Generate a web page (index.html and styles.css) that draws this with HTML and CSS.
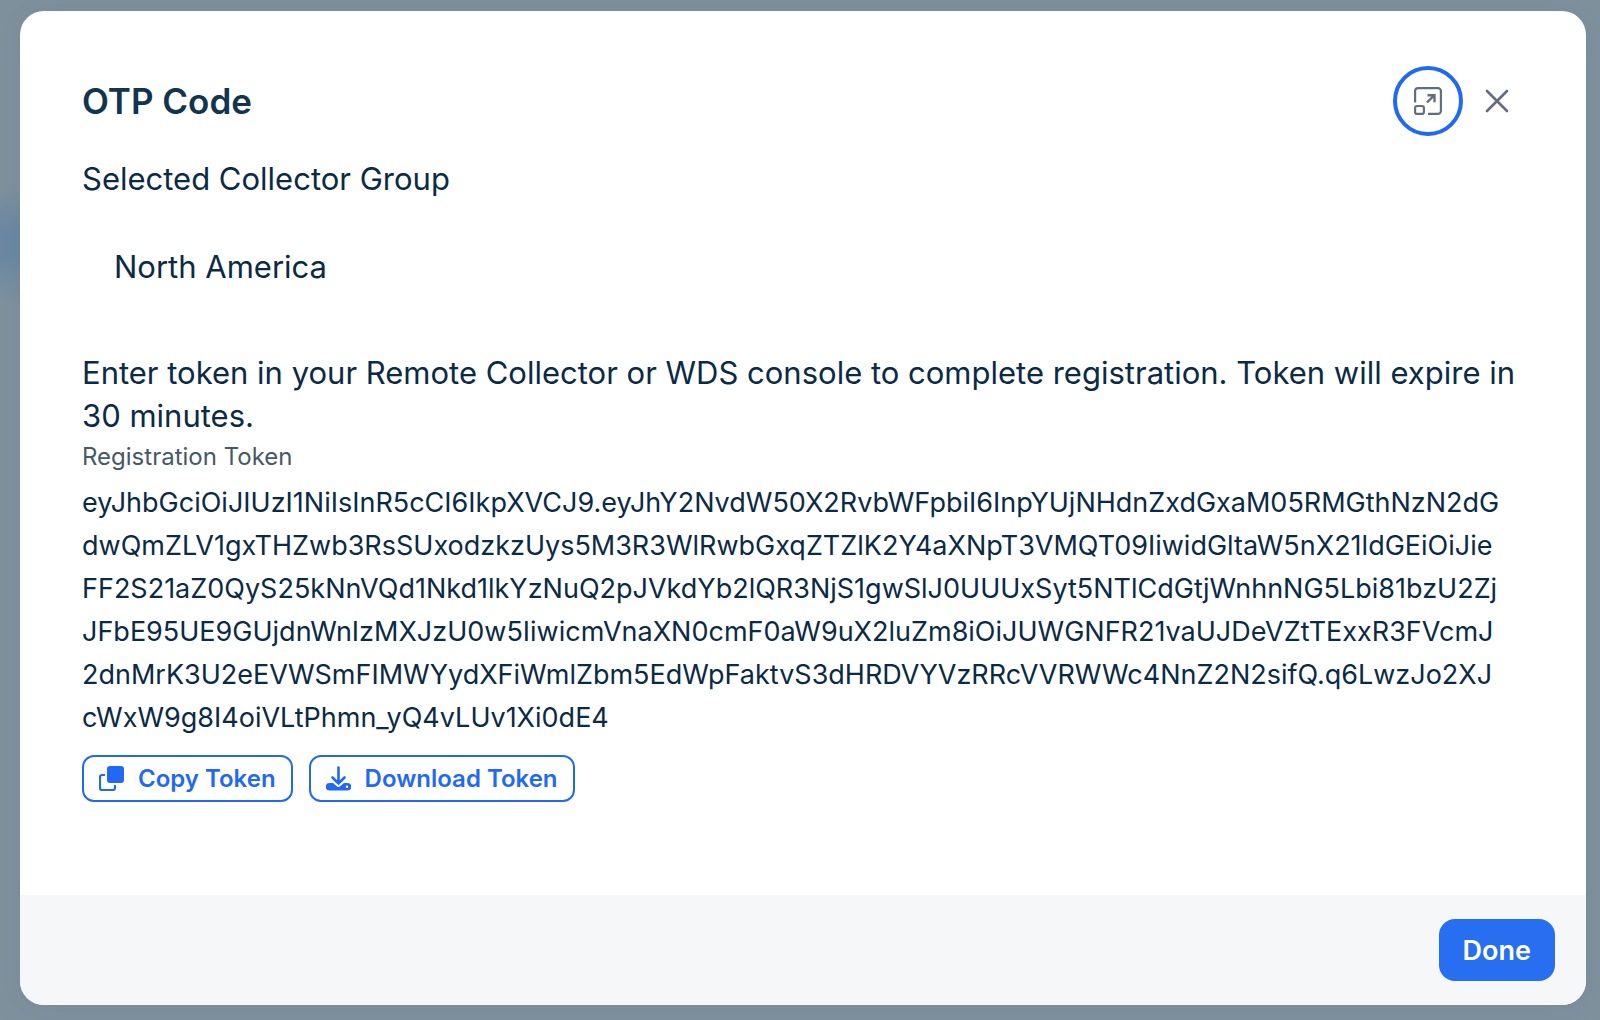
FILE: index.html
```html
<!DOCTYPE html>
<html lang="en">
  <head>
    <meta charset="UTF-8" />
    <meta name="viewport" content="width=device-width, initial-scale=1.0" />
    <title>OTP Code</title>
    <link rel="stylesheet" href="styles.css">
  </head>
  <body>
    <div class="modal" role="dialog" aria-labelledby="modal-title">
      <div class="modal-header">
        <h1 id="modal-title">OTP Code</h1>
        <div class="modal-actions">
          <button type="button" class="icon-btn expand-btn" aria-label="Expand">
            <svg width="28" height="28" viewBox="0 0 28 28" fill="none" stroke="currentColor" stroke-width="2.2">
              <path d="M1.1 15.5V4a3 3 0 0 1 3-2.900h19.800a3 3 0 0 1 3 3v19.800a3 3 0 0 1-3 3H14" />
              <rect x="1.1" y="19" width="8.8" height="7.9" rx="2" />
              <path d="M13 15.5l7-7M13.5 8.300h7v7" stroke-width="2.4" />
            </svg>
          </button>
          <button type="button" class="icon-btn" aria-label="Close">
            <svg width="24" height="24" viewBox="0 0 24 24" fill="none" stroke="currentColor" stroke-width="2.6" stroke-linecap="round">
              <path d="M2 2l20 20M22 2L2 22" />
            </svg>
          </button>
        </div>
      </div>

      <div class="modal-body">
        <p>Selected Collector Group</p>
        <p class="group-name">North America</p>
        <p>Enter token in your Remote Collector or WDS console to complete registration. Token will expire in 30 minutes.</p>
        <div class="token-label">Registration Token</div>
        <div class="token">
          eyJhbGciOiJIUzI1NiIsInR5cCI6IkpXVCJ9.eyJhY2NvdW50X2RvbWFpbiI6InpYUjNHdnZxdGxaM05RMGthNzN2dG<br />
          dwQmZLV1gxTHZwb3RsSUxodzkzUys5M3R3WlRwbGxqZTZlK2Y4aXNpT3VMQT09IiwidGltaW5nX21ldGEiOiJie<br />
          FF2S21aZ0QyS25kNnVQd1Nkd1lkYzNuQ2pJVkdYb2lQR3NjS1gwSlJ0UUUxSyt5NTlCdGtjWnhnNG5Lbi81bzU2Zj<br />
          JFbE95UE9GUjdnWnIzMXJzU0w5IiwicmVnaXN0cmF0aW9uX2luZm8iOiJUWGNFR21vaUJDeVZtTExxR3FVcmJ<br />
          2dnMrK3U2eEVWSmFIMWYydXFiWmlZbm5EdWpFaktvS3dHRDVYVzRRcVVRWWc4NnZ2N2sifQ.q6LwzJo2XJ<br />
          cWxW9g8I4oiVLtPhmn_yQ4vLUv1Xi0dE4
        </div>
        <div class="token-actions">
          <button type="button" class="outline-btn">
            <svg width="25" height="25" viewBox="0 0 25 25">
              <rect x="8" y="0" width="17" height="17" rx="3" fill="currentColor" />
              <path d="M6 9H3a2 2 0 0 0-2 2v11a2 2 0 0 0 2 2h11a2 2 0 0 0 2-2v-3" fill="none" stroke="currentColor" stroke-width="2.2" />
            </svg>
            Copy Token
          </button>
          <button type="button" class="outline-btn">
            <svg width="25" height="25" viewBox="0 0 25 25">
              <path d="M12.5 1.5v15M6.5 11.5l6 6 6-6" fill="none" stroke="currentColor" stroke-width="2.6" stroke-linecap="round" />
              <path d="M3.5 17H7l3.5 3a3 3 0 0 0 4 0l3.5-3h3.5a3.5 3.5 0 0 1 0 7.500h-18a3.500 3.500 0 0 1 0-7.500zM21 19.500a1.200 1.200 0 1 0 0 2.400 1.200 1.200 0 0 0 0-2.400z" fill="currentColor" fill-rule="evenodd" />
            </svg>
            Download Token
          </button>
        </div>
      </div>

      <div class="modal-footer">
        <button type="button" class="done-btn">Done</button>
      </div>
    </div>
  </body>
</html>
```
FILE: styles.css
```css
* {
  box-sizing: border-box;
}

body {
  display: flex;
  min-height: 100vh;
  margin: 0;
  padding: 11px 14px 15px 20px;
  font-family: Inter, sans-serif;
  color: #0b2a45;
  background: linear-gradient(
      #6b88a300 190px,
      #6b88a3 230px,
      #6b88a3 255px,
      #6b88a300 300px
    ) left top / 20px 100% no-repeat,
    #7f919d;
}

.modal {
  flex: 1;
  display: flex;
  flex-direction: column;
  overflow: hidden;
  background-color: white;
  border-radius: 24px;
  box-shadow: 0 0 32px rgba(90, 120, 140, 0.25);
}

.modal-header {
  display: flex;
  justify-content: space-between;
  align-items: center;
  padding: 55px 55px 0 62px;
}

h1 {
  margin: 0;
  font-size: 35px;
  font-weight: 600;
  line-height: 44px;
  color: #12344d;
}

.modal-actions {
  display: flex;
}

button {
  font-family: inherit;
  cursor: pointer;
}

.icon-btn {
  display: flex;
  align-items: center;
  justify-content: center;
  width: 68px;
  height: 70px;
  padding: 0;
  color: #646c80;
  background: none;
  border: none;
}

.expand-btn {
  width: 70px;
  border: 4px solid #1f69f5;
  border-radius: 50%;
}

.modal-body {
  flex: 1;
  padding: 21px 62px 0;
}

p {
  margin: 0;
  font-size: 31px;
  line-height: 43px;
}

.group-name {
  padding: 45px 32px 63px;
}

.token-label {
  padding: 5px 0 9px;
  font-size: 24px;
  line-height: 30px;
  color: #475867;
}

.token {
  font-size: 27px;
  line-height: 43px;
  word-break: break-all;
}

.token-actions {
  display: flex;
  gap: 16px;
  padding: 16px 0;
}

.outline-btn {
  display: flex;
  align-items: center;
  gap: 14px;
  height: 47px;
  padding: 0 15px;
  font-size: 24px;
  font-weight: 600;
  color: #1f69f5;
  background-color: white;
  border: 2px solid #1f69f5;
  border-radius: 12px;
}

.modal-footer {
  display: flex;
  justify-content: flex-end;
  padding: 24px 31px;
  background-color: #f5f7f9;
}

.done-btn {
  height: 62px;
  padding: 0 24px;
  font-size: 27px;
  font-weight: 600;
  color: white;
  background-color: #276ef1;
  border: none;
  border-radius: 16px;
}
```
